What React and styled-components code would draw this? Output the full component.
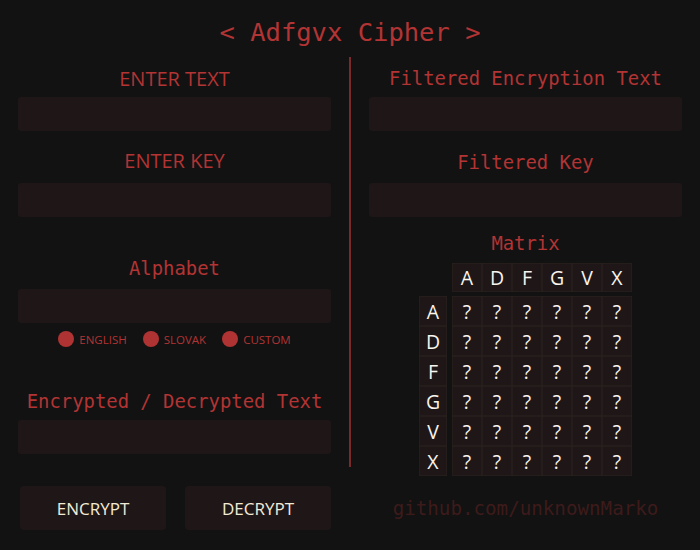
import React from "react";
import styled, { createGlobalStyle } from "styled-components";

const GlobalStyle = createGlobalStyle`
  html, body {
    margin: 0;
    padding: 0;
    background: #121212;
  }
  body {
    font-family: "Open Sans", "Noto Sans", sans-serif;
  }
`;

const RED = "#b23434";
const FIELD = "#1f1717";
const CREAM = "#f3ead6";
const MONO = `"DejaVu Sans Mono", "Liberation Mono", monospace`;
const SANS = `"Open Sans", "Noto Sans", sans-serif`;

const Page = styled.div`
  width: 700px;
  height: 550px;
  box-sizing: border-box;
  padding: 0 18px;
  background: #121212;
  overflow: hidden;
`;

const Title = styled.h1`
  margin: 0;
  padding-top: 17px;
  height: 40px;
  box-sizing: border-box;
  text-align: center;
  font-family: ${MONO};
  font-size: 25.5px;
  font-weight: normal;
  line-height: 30px;
  color: ${RED};
`;

const Main = styled.div`
  display: flex;
  align-items: flex-start;
  margin-top: 17px;
`;

const Column = styled.div`
  width: 313px;
  display: flex;
  flex-direction: column;
`;

const Divider = styled.div`
  width: 2px;
  height: 410px;
  margin: 0 18px;
  background: #7a2a2a;
`;

const Label = styled.div`
  text-align: center;
  color: ${RED};
  line-height: 24px;
  font-family: ${(p) => (p.$mono ? MONO : SANS)};
  font-size: ${(p) => (p.$mono ? "18.9px" : "20px")};
  margin-top: ${(p) => p.$top}px;
  margin-bottom: ${(p) => p.$bottom}px;
`;

const Field = styled.input`
  display: block;
  width: 100%;
  height: 34px;
  box-sizing: border-box;
  border: none;
  border-radius: 3px;
  background: ${FIELD};
  color: ${CREAM};
  padding: 0 10px;
  outline: none;
`;

const Radios = styled.div`
  display: flex;
  justify-content: center;
  align-items: center;
  gap: 16px;
  margin-top: 8px;
  height: 16px;
`;

const RadioOption = styled.label`
  display: flex;
  align-items: center;
  gap: 5px;
  font-family: ${SANS};
  font-size: 11.5px;
  color: ${RED};
`;

const Dot = styled.span`
  width: 16px;
  height: 16px;
  border-radius: 50%;
  background: #b03333;
`;

const MatrixGrid = styled.div`
  align-self: center;
  display: grid;
  grid-template-columns: 28px 5px repeat(6, 30px);
  grid-template-rows: 29px 4px repeat(6, 30px);
`;

const Cell = styled.div`
  grid-column: ${(p) => p.$col};
  grid-row: ${(p) => p.$row};
  display: flex;
  align-items: center;
  justify-content: center;
  background: ${FIELD};
  box-shadow: inset 0 0 0 0.5px #2c2222;
  font-family: ${SANS};
  font-size: 19.5px;
  color: #f8f4ee;
`;

const Footer = styled.div`
  display: flex;
  align-items: center;
  margin-top: 10px;
`;

const Buttons = styled.div`
  width: 313px;
  display: flex;
  gap: 19px;
  padding-left: 2px;
  box-sizing: border-box;
`;

const Button = styled.button`
  width: 146px;
  height: 44px;
  border: none;
  border-radius: 4px;
  background: ${FIELD};
  color: ${CREAM};
  font-family: ${SANS};
  font-size: 17px;
  cursor: pointer;
`;

const Credit = styled.div`
  flex: 1;
  margin-left: 38px;
  text-align: center;
  font-family: ${MONO};
  font-size: 19.2px;
  color: #3e1b1b;
`;

const KEYS = ["A", "D", "F", "G", "V", "X"];

function Matrix() {
  const cells = [];
  KEYS.forEach((k, i) =>
    cells.push(
      <Cell key={"h" + k} $col={i + 3} $row={1}>
        {k}
      </Cell>
    )
  );
  KEYS.forEach((r, j) => {
    cells.push(
      <Cell key={"r" + r} $col={1} $row={j + 3}>
        {r}
      </Cell>
    );
    KEYS.forEach((c, i) =>
      cells.push(
        <Cell key={r + c} $col={i + 3} $row={j + 3}>
          ?
        </Cell>
      )
    );
  });
  return <MatrixGrid>{cells}</MatrixGrid>;
}

export default function App() {
  return (
    <Page>
      <GlobalStyle />
      <Title>&lt; Adfgvx Cipher &gt;</Title>
      <Main>
        <Column>
          <Label $top={10} $bottom={6}>ENTER TEXT</Label>
          <Field />
          <Label $top={18} $bottom={10}>ENTER KEY</Label>
          <Field />
          <Label $mono $top={39} $bottom={9}>Alphabet</Label>
          <Field />
          <Radios>
            <RadioOption><Dot />ENGLISH</RadioOption>
            <RadioOption><Dot />SLOVAK</RadioOption>
            <RadioOption><Dot />CUSTOM</RadioOption>
          </Radios>
          <Label $mono $top={42} $bottom={7}>Encrypted / Decrypted Text</Label>
          <Field />
        </Column>
        <Divider />
        <Column>
          <Label $mono $top={9} $bottom={7}>Filtered Encryption Text</Label>
          <Field />
          <Label $mono $top={19} $bottom={9}>Filtered Key</Label>
          <Field />
          <Label $mono $top={14} $bottom={8}>Matrix</Label>
          <Matrix />
        </Column>
      </Main>
      <Footer>
        <Buttons>
          <Button>ENCRYPT</Button>
          <Button>DECRYPT</Button>
        </Buttons>
        <Credit>github.com/unknownMarko</Credit>
      </Footer>
    </Page>
  );
}
